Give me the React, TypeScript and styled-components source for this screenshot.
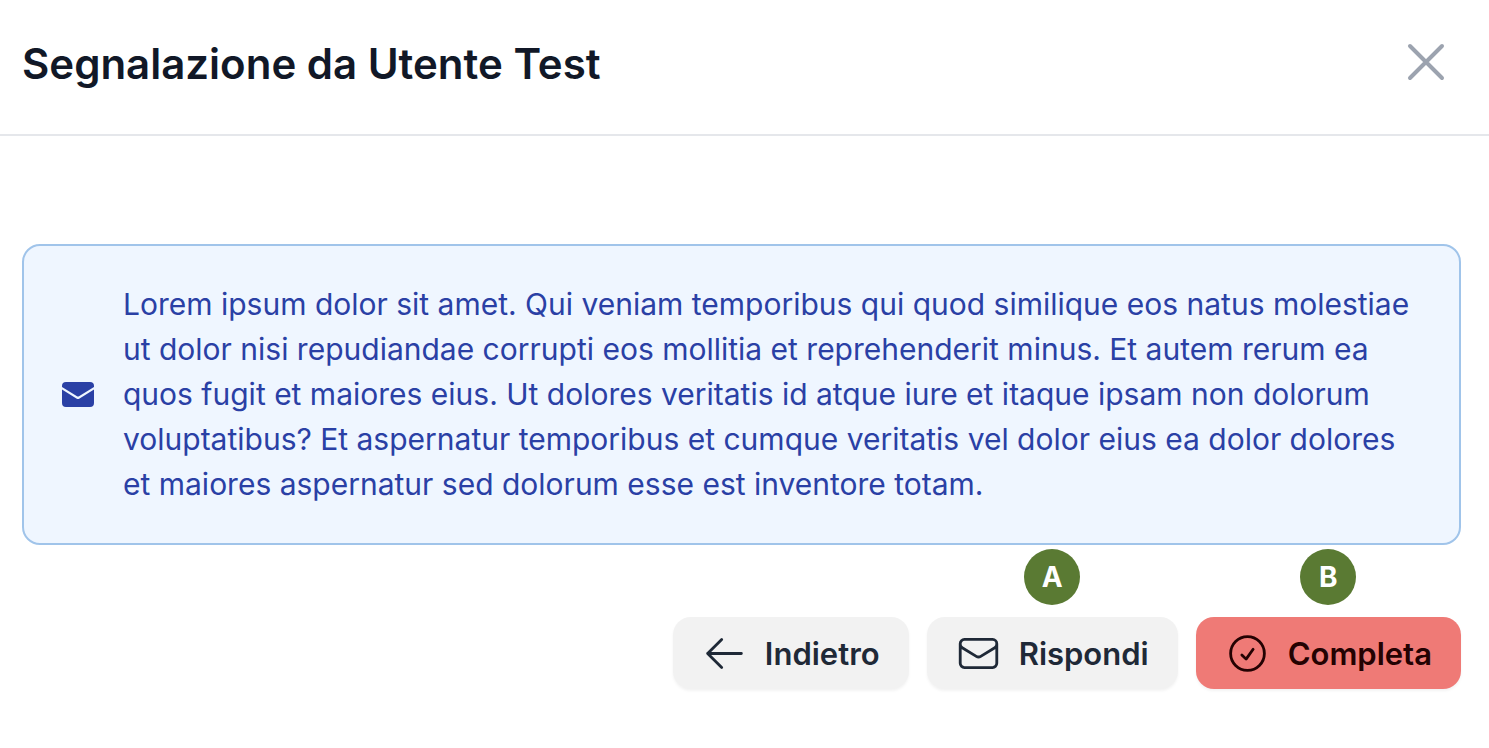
import React from "react";
import styled, { createGlobalStyle, css } from "styled-components";

const GlobalStyle = createGlobalStyle`
  *, *::before, *::after { box-sizing: border-box; }
  body { margin: 0; background: #ffffff; font-family: Inter, "Liberation Sans", sans-serif; }
`;

const Dialog = styled.main`
  display: flex;
  flex-direction: column;
`;

const Header = styled.header`
  display: flex;
  align-items: flex-end;
  justify-content: space-between;
  padding: 30px 31px 40px 22px;
  border-bottom: 2px solid #e5e7eb;
`;

const Title = styled.h1`
  margin: 0;
  font-size: 42px;
  line-height: 60px;
  font-weight: 600;
  color: #111827;
`;

const CloseButton = styled.button`
  display: flex;
  padding: 0;
  border: 0;
  background: none;
  color: #9ca3af;
  cursor: pointer;
`;

const Body = styled.div`
  display: flex;
  flex-direction: column;
  padding: 108px 28px 56px 22px;
`;

const Message = styled.section`
  display: flex;
  align-items: center;
  gap: 29px;
  padding: 36px 36px 36px 38px;
  border: 2px solid #a0c4ea;
  border-radius: 18px;
  background: #eff6ff;
  color: #2a40a5;
`;

const MessageText = styled.p`
  margin: 0;
  flex: 1;
  font-size: 30px;
  line-height: 45px;
`;

const Actions = styled.div`
  display: flex;
  justify-content: flex-end;
  align-items: flex-end;
  gap: 18px;
  padding-top: 4px;
`;

const Action = styled.div`
  display: flex;
  flex-direction: column;
  align-items: center;
  gap: 12px;
`;

const Badge = styled.span`
  display: flex;
  align-items: center;
  justify-content: center;
  width: 56px;
  height: 56px;
  border-radius: 50%;
  background: #5a7a33;
  color: #ffffff;
  font-size: 28px;
  font-weight: 700;
`;

const Button = styled.button<{ $danger?: boolean }>`
  display: flex;
  align-items: center;
  gap: 18px;
  height: 72px;
  padding: 0 29px;
  border: 0;
  border-radius: 18px;
  background: #f2f2f2;
  color: #1f2937;
  font-family: inherit;
  font-size: 31px;
  font-weight: 600;
  box-shadow: 0 2px 3px rgba(0, 0, 0, 0.05);
  cursor: pointer;
  ${(p) => p.$danger && css`
    background: #ef7a76;
    color: #240202;
  `}
`;

const Stroke = ({ size, d }: { size: number; d: string }) => (
  <svg width={size} height={size} viewBox="0 0 24 24" fill="none" stroke="currentColor"
    strokeWidth={1.5} strokeLinecap="round" strokeLinejoin="round" aria-hidden="true">
    <path d={d} />
  </svg>
);

const SolidMail = () => (
  <svg width="32" height="25" viewBox="0 0 32 25" fill="currentColor" aria-hidden="true">
    <path d="M0 5V4a4 4 0 0 1 4-4h24a4 4 0 0 1 4 4v1L17 14.2a2 2 0 0 1-2 0Z" />
    <path d="M0 7.6 14.8 16.7a2.3 2.3 0 0 0 2.4 0L32 7.6V21a4 4 0 0 1-4 4H4a4 4 0 0 1-4-4Z" />
  </svg>
);

export default function App() {
  return (
    <>
      <GlobalStyle />
      <Dialog>
        <Header>
          <Title>Segnalazione da Utente Test</Title>
          <CloseButton type="button" aria-label="Chiudi">
            <Stroke size={64} d="M6 18 18 6M6 6l12 12" />
          </CloseButton>
        </Header>
        <Body>
          <Message>
            <SolidMail />
            <MessageText>
              Lorem ipsum dolor sit amet. Qui veniam temporibus qui quod similique eos natus molestiae
              ut dolor nisi repudiandae corrupti eos mollitia et reprehenderit minus. Et autem rerum ea
              quos fugit et maiores eius. Ut dolores veritatis id atque iure et itaque ipsam non dolorum
              voluptatibus? Et aspernatur temporibus et cumque veritatis vel dolor eius ea dolor dolores
              et maiores aspernatur sed dolorum esse est inventore totam.
            </MessageText>
          </Message>
          <Actions>
            <Action>
              <Button type="button">
                <Stroke size={45} d="M10.5 19.5 3 12m0 0 7.5-7.5M3 12h18" />
                Indietro
              </Button>
            </Action>
            <Action>
              <Badge>A</Badge>
              <Button type="button">
                <Stroke size={45} d="M21.75 6.75v10.5a2.25 2.25 0 0 1-2.25 2.25h-15a2.25 2.25 0 0 1-2.25-2.25V6.75m19.5 0A2.25 2.25 0 0 0 19.5 4.5h-15a2.25 2.25 0 0 0-2.25 2.25m19.5 0v.243a2.25 2.25 0 0 1-1.07 1.916l-7.5 4.615a2.25 2.25 0 0 1-2.36 0L3.32 8.91a2.25 2.25 0 0 1-1.07-1.916V6.75" />
                Rispondi
              </Button>
            </Action>
            <Action>
              <Badge>B</Badge>
              <Button type="button" $danger>
                <Stroke size={45} d="M9 12.75 11.25 15 15 9.75M21 12a9 9 0 1 1-18 0 9 9 0 0 1 18 0Z" />
                Completa
              </Button>
            </Action>
          </Actions>
        </Body>
      </Dialog>
    </>
  );
}
